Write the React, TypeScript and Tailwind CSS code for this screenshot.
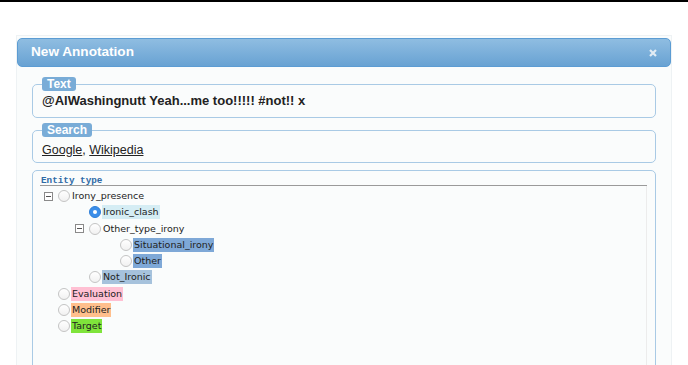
import React from 'react';

type Node = {
    label: string;
    level: number;
    toggle?: boolean;
    checked?: boolean;
    bg?: string;
};

const nodes: Node[] = [
    { label: 'Irony_presence', level: 0, toggle: true },
    { label: 'Ironic_clash', level: 1, checked: true, bg: 'bg-[#d5edf4]' },
    { label: 'Other_type_irony', level: 1, toggle: true },
    { label: 'Situational_irony', level: 2, bg: 'bg-[#7ea8d7]' },
    { label: 'Other', level: 2, bg: 'bg-[#7ea8d7]' },
    { label: 'Not_Ironic', level: 1, bg: 'bg-[#a6c2dc]' },
    { label: 'Evaluation', level: 0, bg: 'bg-[#ffc0d3]' },
    { label: 'Modifier', level: 0, bg: 'bg-[#ffbf8c]' },
    { label: 'Target', level: 0, bg: 'bg-[#7fe43b]' },
];

const indent = ['pl-[4px]', 'pl-[35px]', 'pl-[66px]'];

const Radio = ({ checked }: { checked?: boolean }) =>
    checked ? (
        <span className="w-[12px] h-[12px] rounded-full bg-[#3b8ee9] border border-[#2f7fd8] flex items-center justify-center">
            <span className="w-[4px] h-[4px] rounded-full bg-white" />
        </span>
    ) : (
        <span className="w-[12px] h-[12px] rounded-full bg-gradient-to-b from-white to-[#f1f1f1] border border-[#c4c4c4]" />
    );

const Toggle = () => (
    <span className="w-[9px] h-[9px] border border-[#8a8a8a] bg-white flex items-center justify-center">
        <span className="w-[5px] h-px bg-[#555]" />
    </span>
);

const TreeRow = ({ node }: { node: Node }) => (
    <div className={`flex items-center h-[16.25px] ${indent[node.level]}`}>
        <span className="w-[14px] flex items-center">{node.toggle && <Toggle />}</span>
        <Radio checked={node.checked} />
        <span className={`ml-[1px] px-[1px] leading-[14px] text-[#222] ${node.bg ?? ''}`}>{node.label}</span>
    </div>
);

export default function App() {
    return (
        <div className="h-[365px] overflow-hidden bg-white border-t-2 border-black font-['Liberation_Sans',Arial,sans-serif]">
            <div className="mt-[33px] ml-[16px] w-[656px] h-[400px] bg-[#fafcfc] border border-[#eef2f4] pt-[2px] px-0">
                <div className="h-[29px] rounded-[5px] border border-[#5c9cd3] bg-gradient-to-b from-[#8fbde1] to-[#68a2d3] flex items-center justify-between pl-[13px] pr-[13px]">
                    <span className="text-white font-bold text-[13.6px]">New Annotation</span>
                    <svg width="8" height="8" viewBox="0 0 8 8">
                        <path d="M1 1L7 7M7 1L1 7" stroke="#e2ecf4" strokeWidth="2.2" />
                    </svg>
                </div>

                <fieldset className="mt-[10px] mx-[15px] border border-[#a9cae5] rounded-[5px] px-[9px] pt-[2px] pb-[8px]">
                    <legend className="px-[5px] h-[14px] leading-[14px] rounded-[3px] bg-[#79acd7] text-white font-bold text-[12px]">Text</legend>
                    <div className="text-[13px] leading-[16px] font-bold text-[#222]">@AlWashingnutt Yeah...me too!!!!! #not!! x</div>
                </fieldset>

                <fieldset className="mt-[5px] mx-[15px] border border-[#a9cae5] rounded-[5px] px-[9px] pt-[5px] pb-[4px]">
                    <legend className="px-[5px] h-[14px] leading-[14px] rounded-[3px] bg-[#79acd7] text-white font-bold text-[12px]">Search</legend>
                    <div className="text-[12.5px] leading-[16px] text-[#222]">
                        <a className="underline">Google</a>, <a className="underline">Wikipedia</a>
                    </div>
                </fieldset>

                <div className="mt-[7px] mx-[15px] h-[240px] border border-[#a9cae5] rounded-[5px] pt-[5px] pl-[7px] pr-[8px]">
                    <div className="border-b border-[#9a9a9a] pl-[1px] h-[10px] leading-[10px] text-[9.3px] font-bold text-[#2f6aa6] font-['Liberation_Mono',monospace]">Entity type</div>
                    <div className="h-full border-r border-[#ececec] pt-[2px] font-['DejaVu_Sans',sans-serif] text-[9.5px]">
                        {nodes.map(n => <TreeRow key={n.label} node={n} />)}
                    </div>
                </div>
            </div>
        </div>
    );
}
